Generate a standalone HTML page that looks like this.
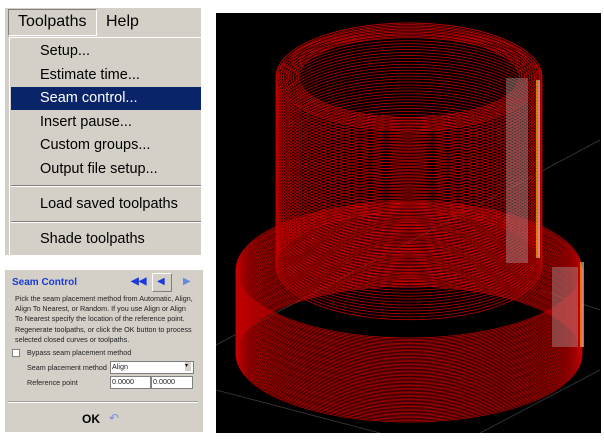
<!DOCTYPE html><html><head><style>
body{margin:0;width:604px;height:445px;background:#fff;position:relative;overflow:hidden;font-family:"Liberation Sans",Arial,sans-serif}
.a{position:absolute}
.m{left:40px;font-size:14.5px;color:#000;white-space:nowrap}
.s{font-size:7.2px;color:#222;white-space:nowrap}
</style></head><body>
<div class="a" style="left:5px;top:8px;width:196px;height:247px;background:#d4d0c8"></div>
<div class="a" style="left:8px;top:9px;width:87px;height:25px;border:1px solid;border-color:#808080 #fff #fff #808080"></div>
<div class="a" style="left:18px;top:13px;font-size:16px">Toolpaths</div>
<div class="a" style="left:106px;top:13px;font-size:16px">Help</div>
<div class="a" style="left:9px;top:37px;width:192px;height:217px;border-left:1px solid #fff;border-top:1px solid #fff"></div>
<div class="a" style="left:11px;top:87px;width:190px;height:23px;background:#0a246a"></div>
<div class="a m" style="top:43px">Setup...</div>
<div class="a m" style="top:67px">Estimate time...</div>
<div class="a m" style="top:90px;color:#fff">Seam control...</div>
<div class="a m" style="top:114px">Insert pause...</div>
<div class="a m" style="top:137px">Custom groups...</div>
<div class="a m" style="top:161px">Output file setup...</div>
<div class="a" style="left:11px;top:185px;width:190px;border-top:1px solid #808080;border-bottom:1px solid #fff"></div>
<div class="a m" style="top:196px">Load saved toolpaths</div>
<div class="a" style="left:11px;top:221px;width:190px;border-top:1px solid #808080;border-bottom:1px solid #fff"></div>
<div class="a m" style="top:231px">Shade toolpaths</div>

<div class="a" style="left:5px;top:270px;width:198px;height:162px;background:#d4d0c8"></div>
<div class="a" style="left:12px;top:277px;font-size:10px;font-weight:bold;color:#1a3adc">Seam Control</div>
<div class="a" style="left:131px;top:276px;font-size:10px;color:#1a3adc;font-weight:bold">◀◀</div>
<div class="a" style="left:152px;top:273px;width:18px;height:17px;border:1px solid;border-color:#fff #808080 #808080 #fff"></div>
<div class="a" style="left:157px;top:276px;font-size:10px;color:#1a3adc">◀</div>
<div class="a" style="left:183px;top:276px;font-size:10px;color:#6a8ae0">▶</div>
<div class="a s" style="left:15px;top:294px;line-height:10.2px">Pick the seam placement method from Automatic, Align,<br>Align To Nearest, or Random. If you use Align or Align<br>To Nearest specify the location of the reference point.<br>Regenerate toolpaths, or click the OK button to process<br>selected closed curves or toolpaths.</div>
<div class="a" style="left:12px;top:349px;width:6px;height:6px;background:#fff;border:1px solid #808080"></div>
<div class="a s" style="left:27px;top:348px">Bypass seam placement method</div>
<div class="a s" style="left:27px;top:363px">Seam placement method</div>
<div class="a" style="left:110px;top:361px;width:82px;height:11px;background:#fff;border:1px solid #808080"></div>
<div class="a s" style="left:112px;top:362px">Align</div>
<div class="a" style="left:185px;top:362px;width:6px;height:9px;background:#d4d0c8;font-size:6px">▾</div>
<div class="a s" style="left:27px;top:378px">Reference point</div>
<div class="a" style="left:110px;top:376px;width:39px;height:11px;background:#fff;border:1px solid #808080"></div>
<div class="a" style="left:151px;top:376px;width:40px;height:11px;background:#fff;border:1px solid #808080"></div>
<div class="a s" style="left:112px;top:377px">0.0000</div>
<div class="a s" style="left:153px;top:377px">0.0000</div>
<div class="a" style="left:8px;top:401px;width:190px;border-top:1px solid #a0a0a0;border-bottom:1px solid #fff"></div>
<div class="a" style="left:82px;top:412px;font-size:12px;font-weight:bold">OK</div>
<div class="a" style="left:109px;top:411px;font-size:12px;color:#7a8ae8">↶</div>

<svg class="a" style="left:216px;top:13px" width="385" height="420" viewBox="216 13 385 420">
<rect x="216" y="13" width="385" height="420" fill="#000"/>
<g stroke="#3a3a3a" stroke-width="0.8">
<line x1="216" y1="345" x2="600" y2="140"/><line x1="216" y1="390" x2="380" y2="433"/>
<line x1="480" y1="433" x2="600" y2="370"/><line x1="540" y1="290" x2="600" y2="310"/>
</g>
<g id="g" fill="none" stroke="#c00000" stroke-width="0.75"></g>
<rect x="506" y="78" width="22" height="185" fill="#bbb" opacity="0.35"/>
<line x1="537" y1="80" x2="537" y2="258" stroke="#ffd000" stroke-width="1.2"/>
<line x1="539" y1="80" x2="539" y2="258" stroke="#fff" stroke-width="1"/>
<rect x="552" y="267" width="26" height="80" fill="#bbb" opacity="0.35"/>
<line x1="581" y1="262" x2="581" y2="347" stroke="#ffd000" stroke-width="1.2"/>
<line x1="583" y1="262" x2="583" y2="347" stroke="#fff" stroke-width="1"/>
</svg>
<script>
var g=document.getElementById('g'),h='';
for(var i=0;i<=60;i++){var cy=270+i*1.4;h+='<ellipse cx="409" cy="'+cy+'" rx="173" ry="68"/>';}
for(var i=0;i<=64;i++){var cy=77+i*2.95;h+='<ellipse cx="409" cy="'+cy+'" rx="133" ry="54"/>';}
for(var i=0;i<10;i++){h+='<ellipse cx="409" cy="77" rx="'+(133-i*2.5)+'" ry="'+(54-i*1.5)+'"/>';}
g.innerHTML=h;
</script>
</body></html>
